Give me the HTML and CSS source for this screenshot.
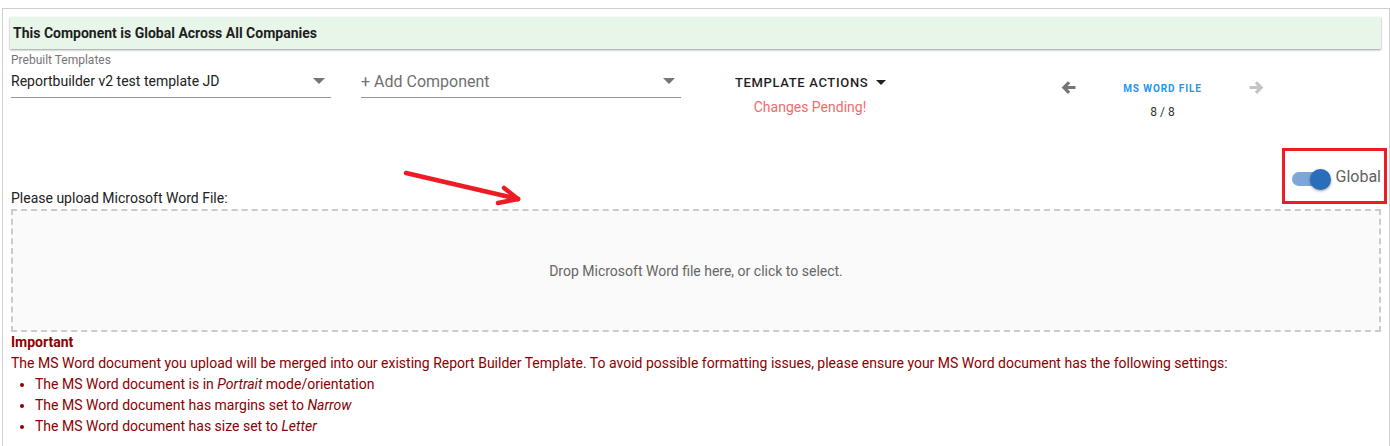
FILE: index.html
```html
<!DOCTYPE html>
<html lang="en">
<head>
    <meta charset="UTF-8">
    <title>Report Builder - MS Word File</title>
    <link rel="stylesheet" href="styles.css">
</head>
<body>
<div class="page">
    <div class="banner">This Component is Global Across All Companies</div>

    <div class="toolbar">
        <div class="field">
            <div class="field-label">Prebuilt Templates</div>
            <div class="select">
                <span>Reportbuilder v2 test template JD</span>
                <span class="caret"></span>
            </div>
        </div>
        <div class="field field-nolabel">
            <div class="select select-empty">
                <span>+ Add Component</span>
                <span class="caret"></span>
            </div>
        </div>
        <div class="actions">
            <div class="actions-btn">TEMPLATE ACTIONS <span class="caret caret-dark"></span></div>
            <div class="pending">Changes Pending!</div>
        </div>
        <div class="nav">
            <svg class="nav-arrow" viewBox="0 0 16 16"><path d="M7.5 2 L1.5 8 L7.5 14 L9.6 11.9 L7.2 9.5 H14.5 V6.5 H7.2 L9.6 4.1 Z" fill="#757575"/></svg>
            <div class="nav-mid">
                <div class="nav-title">MS WORD FILE</div>
                <div class="nav-count">8 / 8</div>
            </div>
            <svg class="nav-arrow" viewBox="0 0 16 16"><path d="M8.5 2 L14.5 8 L8.5 14 L6.4 11.9 L8.8 9.5 H1.5 V6.5 H8.8 L6.4 4.1 Z" fill="#c4c4c4"/></svg>
        </div>
    </div>

    <div class="toggle-row">
        <div class="toggle">
            <div class="toggle-track"></div>
            <div class="toggle-knob"></div>
        </div>
        <span class="toggle-label">Global</span>
    </div>

    <div class="upload-label">Please upload Microsoft Word File:</div>
    <div class="dropzone">Drop Microsoft Word file here, or click to select.</div>

    <div class="notice">
        <div class="notice-title">Important</div>
        <div>The MS Word document you upload will be merged into our existing Report Builder Template. To avoid possible formatting issues, please ensure your MS Word document has the following settings:</div>
        <ul>
            <li>The MS Word document is in <em>Portrait</em> mode/orientation</li>
            <li>The MS Word document has margins set to <em>Narrow</em></li>
            <li>The MS Word document has size set to <em>Letter</em></li>
        </ul>
    </div>

    <!-- annotations drawn over the screenshot -->
    <div class="mark-box"></div>
    <svg class="mark-arrow" width="130" height="50" viewBox="0 0 130 50">
        <g stroke="#ed1c24" stroke-width="4.5" stroke-linecap="round" fill="none">
            <line x1="6" y1="8" x2="118" y2="34"/>
            <line x1="118" y1="34" x2="104" y2="23"/>
            <line x1="118" y1="34" x2="98" y2="38"/>
        </g>
    </svg>
</div>
</body>
</html>
```

FILE: styles.css
```css
body {
    margin: 0;
    font-family: Roboto, "Liberation Sans", Arial, sans-serif;
    background-color: white;
    color: #212121;
}
.page {
    position: relative;
    box-sizing: border-box;
    width: 1388px;
    height: 438px;
    margin: 8px 0 0 2px;
    padding: 8px 8px 0 8px;
    border: 1px solid #cfcfcf;
    border-bottom: none;
}
.banner {
    display: flex;
    align-items: center;
    height: 32px;
    margin-left: -1px;
    padding-left: 3px;
    background-color: #e8f5e9;
    box-shadow: 0 1px 2px rgba(0, 0, 0, .4);
    font-size: 14px;
    font-weight: bold;
    color: #1e1e1e;
}

.toolbar {
    display: flex;
    height: 70px;
    margin-top: 4px;
}
.field {
    width: 320px;
    flex-shrink: 0;
}
.field-nolabel {
    margin-left: 30px;
    padding-top: 14px;
}
.field-label {
    font-size: 12px;
    line-height: 14px;
    color: #757575;
}
.select {
    display: flex;
    align-items: center;
    justify-content: space-between;
    box-sizing: border-box;
    height: 31px;
    padding: 0 6px 2px 0;
    border-bottom: 1px solid #949494;
    font-size: 14px;
}
.select-empty {
    font-size: 16px;
    color: #6f6f6f;
}
.caret {
    width: 0;
    height: 0;
    border-left: 6px solid transparent;
    border-right: 6px solid transparent;
    border-top: 6px solid #757575;
}
.caret-dark {
    display: inline-block;
    margin-left: 4px;
    vertical-align: 2px;
    border-top-color: #212121;
    border-left-width: 5px;
    border-right-width: 5px;
    border-top-width: 5px;
}

.actions {
    flex-shrink: 0;
    width: 150px;
    margin-left: 54px;
    padding-top: 20px;
    text-align: center;
    white-space: nowrap;
}
.actions-btn {
    font-size: 13px;
    font-weight: 500;
    letter-spacing: .65px;
    line-height: 20px;
    color: #1f1f1f;
}
.pending {
    margin-top: 4px;
    font-size: 14px;
    line-height: 20px;
    color: #f26b6b;
}

.nav {
    display: flex;
    align-items: flex-start;
    margin-left: 175px;
    padding-top: 25px;
}
.nav-arrow {
    width: 17px;
    height: 17px;
    margin-top: 1px;
}
.nav-mid {
    width: 171px;
    text-align: center;
}
.nav-title {
    font-size: 10px;
    font-weight: bold;
    letter-spacing: .9px;
    line-height: 22px;
    color: #2196f3;
}
.nav-count {
    font-size: 12px;
    line-height: 24px;
    color: #333;
}

.toggle-row {
    display: flex;
    justify-content: flex-end;
    align-items: center;
    height: 24px;
    margin-top: 42px;
}
.toggle {
    position: relative;
    width: 39px;
    height: 21px;
    margin-top: 4px;
}
.toggle-track {
    position: absolute;
    left: 0;
    top: 3px;
    width: 37px;
    height: 14px;
    border-radius: 7px;
    background-color: #7ea6d9;
}
.toggle-knob {
    position: absolute;
    left: 18px;
    top: 0;
    width: 21px;
    height: 21px;
    border-radius: 50%;
    background-color: #2a6ebb;
    box-shadow: 0 1px 3px rgba(0, 0, 0, .4);
}
.toggle-label {
    margin-left: 5px;
    margin-top: -2px;
    font-size: 16px;
    color: #616161;
}

.upload-label {
    margin-top: 1px;
    font-size: 14px;
    line-height: 16px;
    color: #222;
}
.dropzone {
    display: flex;
    align-items: center;
    justify-content: center;
    box-sizing: border-box;
    height: 123px;
    margin-top: 3px;
    border: 2px dashed #cbcbcb;
    background-color: #fafafa;
    font-size: 14px;
    color: #666;
}

.notice {
    font-size: 14px;
    line-height: 21px;
    color: #8b0000;
}
.notice-title {
    font-weight: bold;
}
.notice ul {
    margin: 0;
    padding-left: 24px;
}

.mark-box {
    position: absolute;
    left: 1279px;
    top: 139px;
    width: 99px;
    height: 50px;
    border: 3px solid #ed1c24;
}
.mark-arrow {
    position: absolute;
    left: 397px;
    top: 156px;
}
```
